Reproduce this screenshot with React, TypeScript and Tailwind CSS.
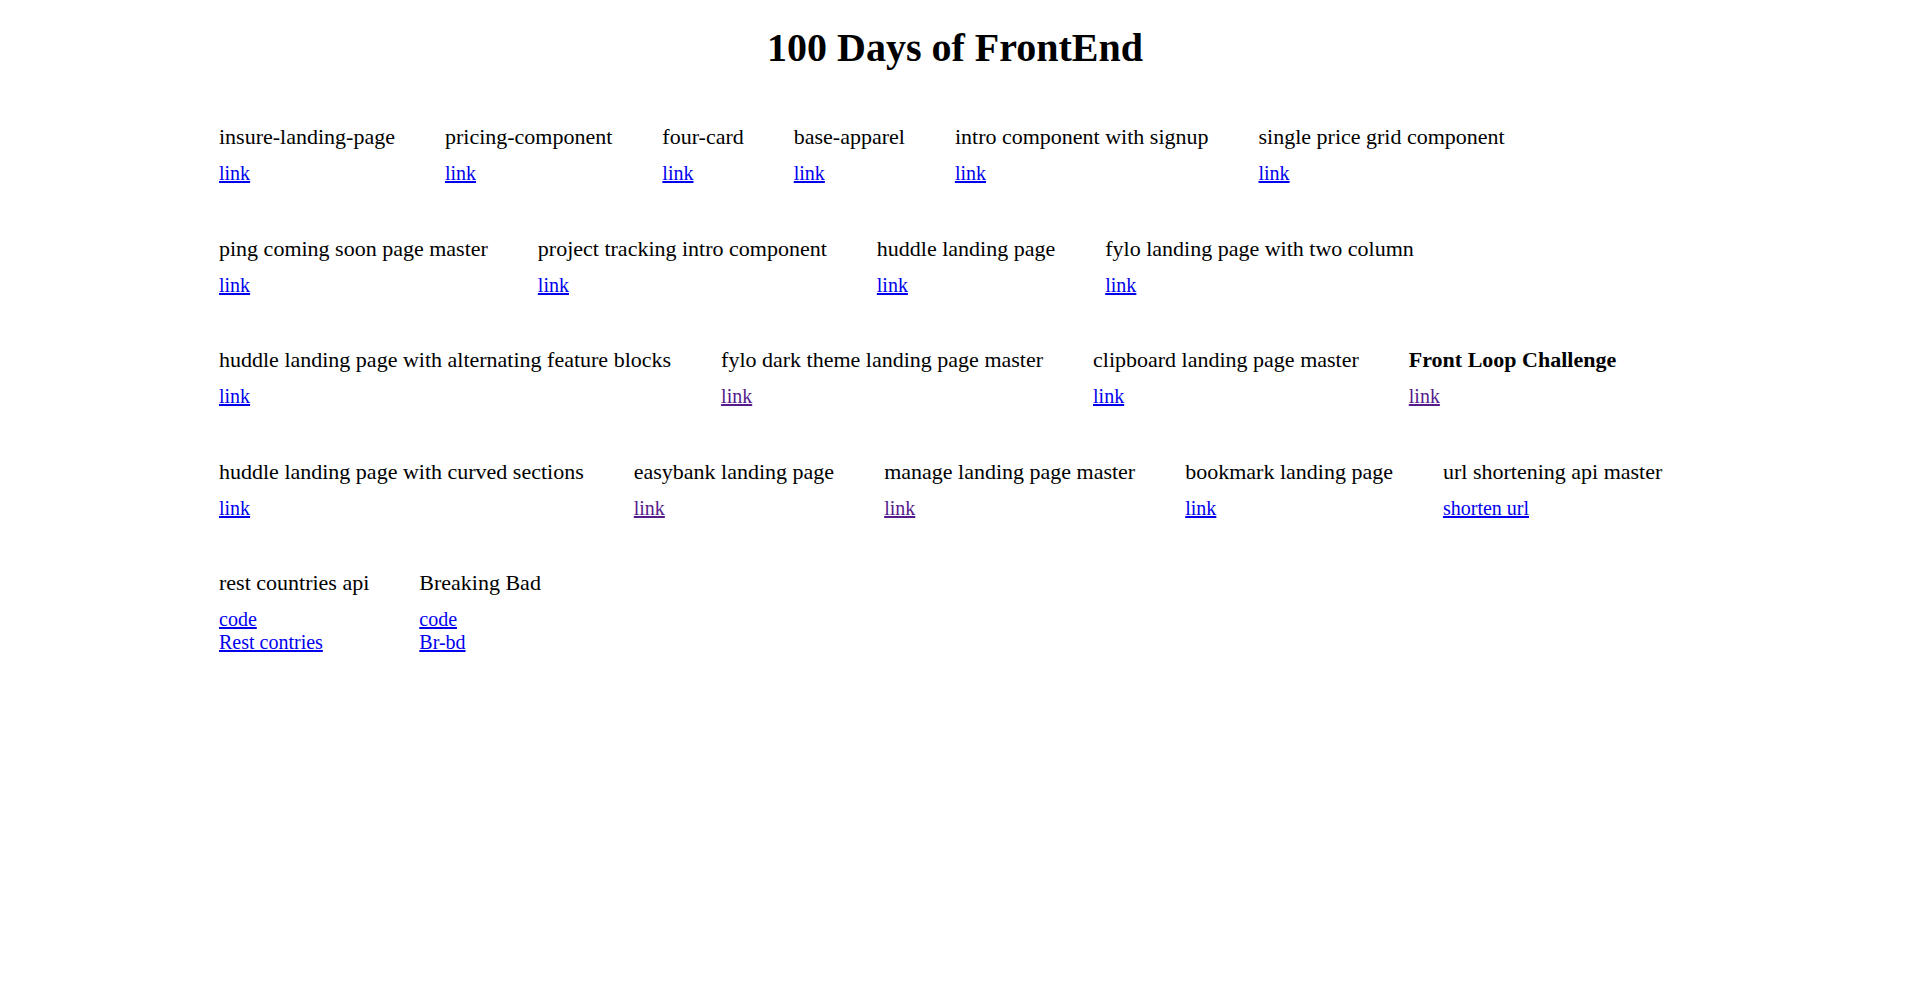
const blue = "text-[#0000ee]";
const visited = "text-[#551a8b]";

type Project = {
  title: string;
  bold?: boolean;
  links: { label: string; seen?: boolean }[];
};

const rows: Project[][] = [
  [
    { title: "insure-landing-page", links: [{ label: "link" }] },
    { title: "pricing-component", links: [{ label: "link" }] },
    { title: "four-card", links: [{ label: "link" }] },
    { title: "base-apparel", links: [{ label: "link" }] },
    { title: "intro component with signup", links: [{ label: "link" }] },
    { title: "single price grid component", links: [{ label: "link" }] },
  ],
  [
    { title: "ping coming soon page master", links: [{ label: "link" }] },
    { title: "project tracking intro component", links: [{ label: "link" }] },
    { title: "huddle landing page", links: [{ label: "link" }] },
    { title: "fylo landing page with two column", links: [{ label: "link" }] },
  ],
  [
    { title: "huddle landing page with alternating feature blocks", links: [{ label: "link" }] },
    { title: "fylo dark theme landing page master", links: [{ label: "link", seen: true }] },
    { title: "clipboard landing page master", links: [{ label: "link" }] },
    { title: "Front Loop Challenge", bold: true, links: [{ label: "link", seen: true }] },
  ],
  [
    { title: "huddle landing page with curved sections", links: [{ label: "link" }] },
    { title: "easybank landing page", links: [{ label: "link", seen: true }] },
    { title: "manage landing page master", links: [{ label: "link", seen: true }] },
    { title: "bookmark landing page", links: [{ label: "link" }] },
    { title: "url shortening api master", links: [{ label: "shorten url" }] },
  ],
  [
    { title: "rest countries api", links: [{ label: "code" }, { label: "Rest contries" }] },
    { title: "Breaking Bad", links: [{ label: "code" }, { label: "Br-bd" }] },
  ],
];

export default function App() {
  return (
    <div className="min-h-screen bg-white text-black font-['Liberation_Serif','Times_New_Roman',serif]">
      <h1 className="pt-[25px] text-center text-[40px] font-bold leading-[46px]">
        100 Days of FrontEnd
      </h1>
      <div className="mt-[53px] flex flex-col gap-[50.6px] px-[219px]">
        {rows.map((row, i) => (
          <div key={i} className="flex items-start gap-[50px]">
            {row.map((p) => (
              <ProjectCard key={p.title} project={p} />
            ))}
          </div>
        ))}
      </div>
    </div>
  );
}

function ProjectCard({ project }: { project: Project }) {
  return (
    <div className="flex flex-col">
      <p className={`text-[22px] leading-[25px] whitespace-nowrap ${project.bold ? "font-bold" : ""}`}>
        {project.title}
      </p>
      <div className="mt-[13px] flex flex-col">
        {project.links.map((l) => (
          <a
            key={l.label}
            href="#"
            className={`text-[20px] leading-[23px] underline w-fit ${l.seen ? visited : blue}`}
          >
            {l.label}
          </a>
        ))}
      </div>
    </div>
  );
}
